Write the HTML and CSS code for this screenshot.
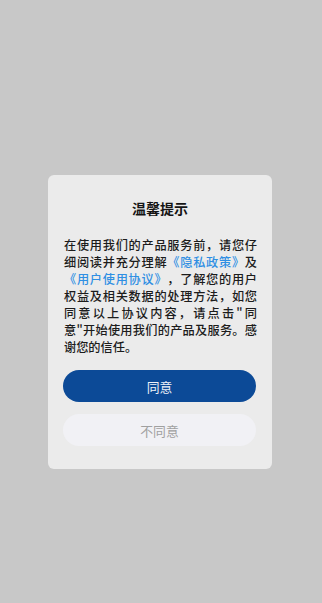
FILE: index.html
```html
<!DOCTYPE html>
<html lang="zh-CN">
<head>
    <meta charset="UTF-8">
    <meta name="viewport" content="width=device-width, initial-scale=1.0">
    <title>温馨提示</title>
    <link rel="stylesheet" href="styles.css">
</head>
<body>
    <div class="dialog">
        <h1 class="dialog-title">温馨提示</h1>
        <p class="dialog-text">在使用我们的产品服务前，请您仔细阅读并充分理解<a href="#" class="link">《隐私政策》</a>及<a href="#" class="link">《用户使用协议》</a>，了解您的用户权益及相关数据的处理方法，如您同意以上协议内容，请点击"同意"开始使用我们的产品及服务。感谢您的信任。</p>
        <button type="button" class="btn btn-agree">同意</button>
        <button type="button" class="btn btn-refuse">不同意</button>
    </div>
</body>
</html>
```

FILE: styles.css
```css
body {
    font-family: "Noto Sans CJK SC", "Noto Sans", sans-serif;
    background-color: #c8c8c8;
    color: #1c1c1c;
    margin: 0;
    padding: 175px 0 0 48px;
    height: 603px;
    box-sizing: border-box;
}

.dialog {
    background-color: #ebebeb;
    border-radius: 6px;
    width: 224px;
    box-sizing: border-box;
    padding: 23px 15px 23px 15px;
    display: flex;
    flex-direction: column;
}

.dialog-title {
    font-size: 14px;
    font-weight: bold;
    line-height: 20px;
    text-align: center;
    margin: 0 0 19px;
    color: #141414;
}

.dialog-text {
    font-size: 12.2px;
    font-weight: 500;
    line-height: 17px;
    text-align: justify;
    text-spacing-trim: space-all;
    margin: 0 0 14px 1px;
}

.link {
    color: #2f8fe3;
    text-decoration: none;
}

.btn {
    display: block;
    width: 193px;
    height: 32px;
    border: none;
    border-radius: 16px;
    font-family: inherit;
    font-size: 12.8px;
    cursor: pointer;
}

.btn-agree {
    background-color: #0c4a97;
    color: #eef2f8;
    margin-bottom: 12px;
}

.btn-refuse {
    background-color: #f1f1f5;
    color: #a0a0a0;
}
```
